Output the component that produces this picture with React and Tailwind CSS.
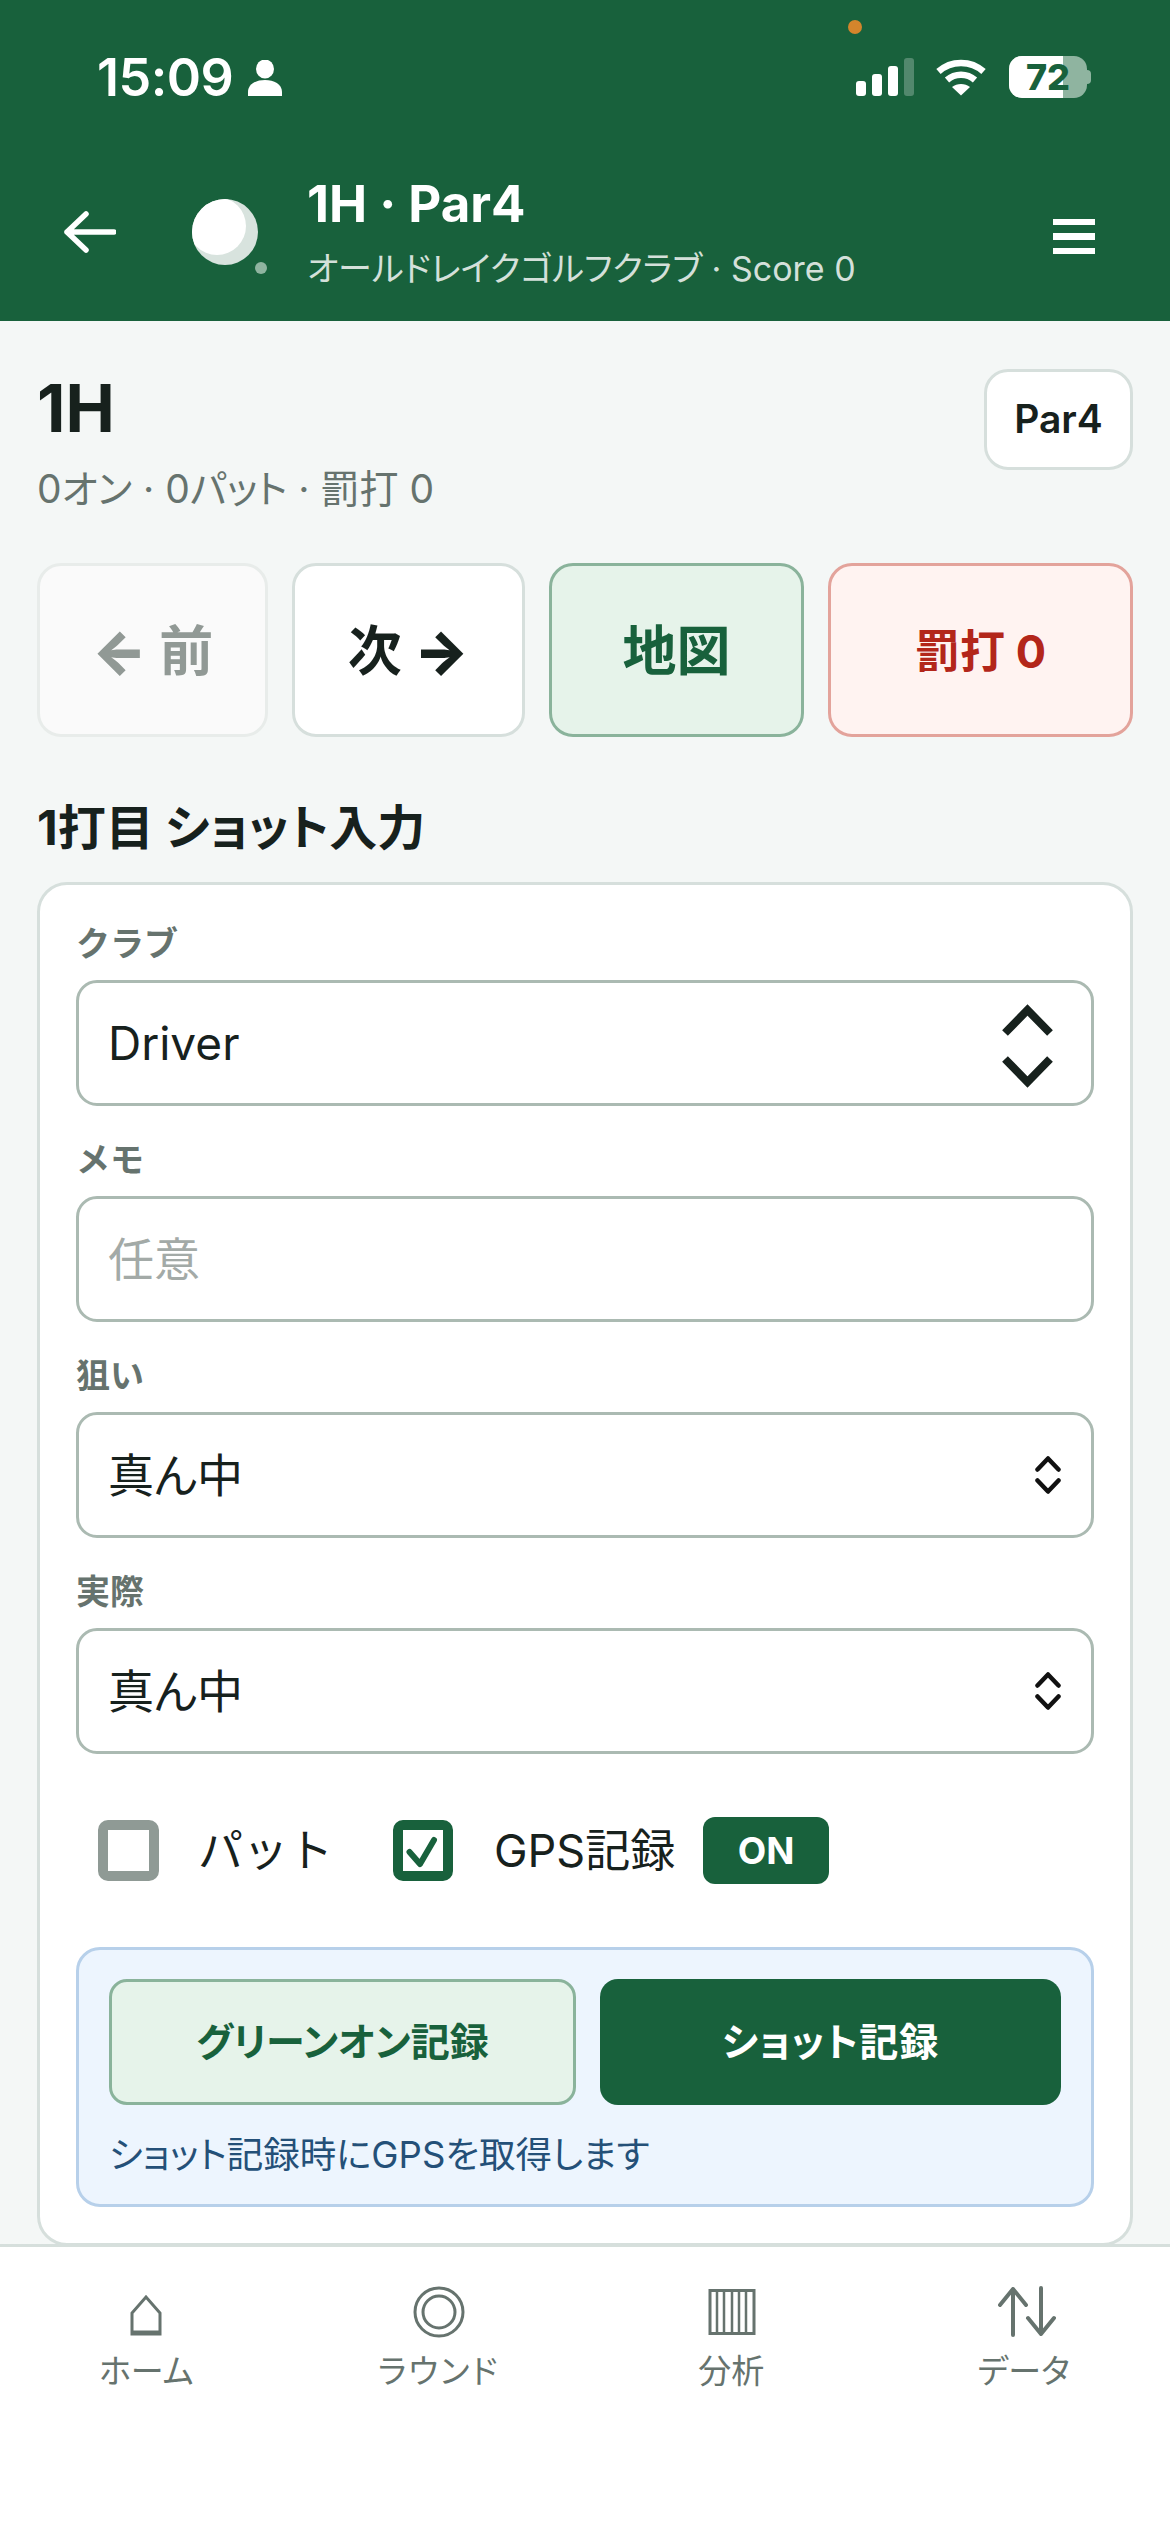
import React from "react";

function SmallChevrons() {
  return (
    <svg className="pointer-events-none absolute right-[33px] top-1/2 -translate-y-1/2" width="26" height="38" viewBox="0 0 26 38" fill="none" stroke="#111" strokeWidth="4.5" strokeLinecap="round" strokeLinejoin="round">
      <path d="M2.5 13.5L13 2.5l10.5 11" />
      <path d="M2.5 24.5L13 35.5l10.5-11" />
    </svg>
  );
}

function BigChevrons() {
  return (
    <svg className="pointer-events-none absolute right-[41px] top-[24px]" width="51" height="84" viewBox="0 0 51 84" fill="none" stroke="#17211d" strokeWidth="8">
      <path d="M3 29L25.5 6 48 29" />
      <path d="M3 55l22.5 23L48 55" />
    </svg>
  );
}

function Field({ label, children, top }) {
  return (
    <div className={top}>
      <div className="h-[40px] text-[34px] leading-[40px] font-semibold text-[#66736e] [font-feature-settings:normal]">{label}</div>
      <div className="relative mt-[16px]">{children}</div>
    </div>
  );
}

function Select({ value, big }) {
  return (
    <>
      <select defaultValue={value} className="block h-[126px] w-full appearance-none rounded-[21px] border-[3px] border-[#abbab2] bg-white pl-[29px] text-[46px] text-[#17211d] outline-none">
        <option>{value}</option>
      </select>
      {big ? <BigChevrons /> : <SmallChevrons />}
    </>
  );
}

function TabIcon({ children }) {
  return <svg width="64" height="56" viewBox="0 0 64 56" fill="none" stroke="#66736e" className="block">{children}</svg>;
}

function Tab({ label, children, spaced }) {
  return (
    <div className="flex flex-1 flex-col items-center">
      {children}
      <div className={"mt-[9px] text-[33px] leading-[40px] text-[#66736e] " + (spaced ? "tracking-[2px]" : "")}>{label}</div>
    </div>
  );
}

export default function App() {
  return (
    <div className="flex h-[2532px] w-[1170px] flex-col overflow-hidden bg-[#f4f7f6] font-['Inter','Noto_Sans_CJK_JP',sans-serif] text-[#17211d] [font-feature-settings:'palt']">
      {/* Header */}
      <header className="relative h-[321px] shrink-0 bg-[#18613c] text-white">
        <div className="flex h-[156px] items-start justify-between pl-[97px] pr-[79px] pt-[50px]">
          <div className="flex items-center">
            <span className="text-[52px] leading-[56px] font-semibold tracking-[-0.5px]">15:09</span>
            <svg className="ml-[15px]" width="34" height="36" viewBox="0 0 34 36" fill="#fff">
              <ellipse cx="17" cy="9" rx="9" ry="9.5" />
              <path d="M0 36v-4c0-8 8-12 17-12s17 4 17 12v4z" />
            </svg>
          </div>
          <div className="flex items-center pt-[6px]">
            <svg width="58" height="38" viewBox="0 0 58 38" fill="#fff">
              <rect x="0" y="23" width="10" height="15" rx="3" />
              <rect x="16" y="16" width="10" height="22" rx="3" />
              <rect x="32" y="8" width="10" height="30" rx="3" />
              <rect x="48" y="0" width="10" height="38" rx="3" fillOpacity="0.25" />
            </svg>
            <svg className="ml-[22px]" width="50" height="38" viewBox="0 0 50 38" fill="none" stroke="#fff" strokeWidth="6.5">
              <path d="M2.5 13.5C15 2 35 2 47.5 13.5" />
              <path d="M11 22c8-7 20-7 28 0" />
              <path d="M25 37.5L16 29c5-4 13-4 18 0z" fill="#fff" stroke="none" />
            </svg>
            <div className="relative ml-[23px] flex h-[42px] w-[78px] items-center justify-center overflow-hidden rounded-[13px] bg-[#8fb4a0]">
              <div className="absolute inset-y-0 left-0 w-[54px] bg-white" />
              <span className="relative text-[36px] leading-none font-extrabold text-[#18613c]">72</span>
            </div>
            <div className="h-[14px] w-[4px] rounded-r-full bg-[#8fb4a0]" />
          </div>
        </div>
        <div className="absolute left-[848px] top-[20px] h-[14px] w-[14px] rounded-full bg-[#d4852c]" />
        <div className="flex h-[151px] items-center pl-[64px] pr-[75px]">
          <svg width="52" height="42" viewBox="0 0 52 42" fill="none" stroke="#fff" strokeWidth="5.5" strokeLinecap="round" strokeLinejoin="round">
            <path d="M50 21H3M22 3L3 21l19 18" />
          </svg>
          <div className="relative ml-[76px] h-[66px] w-[66px] shrink-0">
            <div className="relative h-[66px] w-[66px] overflow-hidden rounded-full bg-[#d8e3de]">
              <div className="absolute left-[-4px] top-[-2px] h-[58px] w-[58px] rounded-full bg-white" />
            </div>
            <div className="absolute left-[63px] top-[63px] h-[12px] w-[12px] rounded-full bg-[#8fb4a0]" />
          </div>
          <div className="ml-[49px] flex-1">
            <div className="text-[51px] leading-[62px] font-bold">1H · Par4</div>
            <div className="mt-[12px] text-[34px] leading-[44px] text-[#d4e0da]">オールドレイクゴルフクラブ · Score 0</div>
          </div>
          <div className="mt-[10px] flex w-[42px] flex-col gap-[8px]">
            <div className="h-[6.5px] bg-white" />
            <div className="h-[6.5px] bg-white" />
            <div className="h-[6.5px] bg-white" />
          </div>
        </div>
      </header>

      {/* Main */}
      <main className="flex-1 overflow-hidden px-[37px] pt-[48px]">
        <div className="flex items-start justify-between">
          <div>
            <div className="pt-[1px] text-[66px] leading-[76px] font-bold">1H</div>
            <div className="mt-[19px] text-[39px] leading-[48px] text-[#66736e]">0オン · 0パット · 罰打 0</div>
          </div>
          <div className="flex h-[101px] w-[149px] items-center justify-center rounded-[24px] border-[3px] border-[#d6dfdc] bg-white text-[39px] font-semibold">Par4</div>
        </div>

        <div className="mt-[50px] flex h-[174px] gap-[24px]">
          <div className="flex w-[231px] items-center justify-center gap-[12px] rounded-[24px] border-[3px] border-[#e8ecea] bg-[#fafafa] pt-[3px] text-[54px] font-bold text-[#919995]">
            <span className="text-[58px] font-black">←</span><span>前</span>
          </div>
          <div className="flex w-[233px] items-center justify-center gap-[12px] rounded-[24px] border-[3px] border-[#d6dfdc] bg-white pt-[3px] text-[54px] font-bold">
            <span>次</span><span className="text-[58px] font-black">→</span>
          </div>
          <div className="flex w-[255px] items-center justify-center rounded-[24px] border-[3px] border-[#8ab39b] bg-[#e6f3ea] pt-[3px] text-[54px] font-bold text-[#18613c]">地図</div>
          <div className="flex flex-1 items-center justify-center rounded-[24px] border-[3px] border-[#e3a39b] bg-[#fff3f1] pt-[3px] text-[45px] font-bold text-[#b3261a]">罰打 0</div>
        </div>

        <div className="mt-[63px] text-[48px] leading-[56px] font-bold">1打目 ショット入力</div>

        <section className="mt-[26px] rounded-[30px] border-[3px] border-[#d6dfdc] bg-white px-[36px] pb-[36px] pt-[39px]">
          <Field label="クラブ"><Select value="Driver" big /></Field>
          <Field label="メモ" top="mt-[34px]">
            <input placeholder="任意" className="block h-[126px] w-full rounded-[21px] border-[3px] border-[#abbab2] bg-white pl-[29px] pr-[30px] text-[46px] outline-none placeholder:text-[#a3aaa7]" />
          </Field>
          <Field label="狙い" top="mt-[34px]"><Select value="真ん中" /></Field>
          <Field label="実際" top="mt-[34px]"><Select value="真ん中" /></Field>

          <div className="mt-[63px] flex h-[67px] items-center pl-[22px]">
            <span className="h-[61px] w-[61px] shrink-0 rounded-[10px] border-[10px] border-[#8f9a95] bg-white" />
            <span className="ml-[39px] w-[195px] shrink-0 text-[45px] [font-feature-settings:normal]">パット</span>
            <span className="flex h-[61px] w-[60px] shrink-0 items-center justify-center rounded-[10px] border-[10px] border-[#18613c] bg-white">
              <svg width="40" height="41" viewBox="0 0 40 41" fill="none" stroke="#18613c" strokeWidth="6" strokeLinecap="round" strokeLinejoin="round" className="shrink-0">
                <path d="M6.5 22L17 34 31 10" />
              </svg>
            </span>
            <span className="ml-[41px] w-[209px] shrink-0 text-[45px]">GPS記録</span>
            <span className="flex h-[67px] w-[126px] shrink-0 items-center justify-center rounded-[12px] bg-[#18613c] text-[37px] font-bold text-white">ON</span>
          </div>

          <div className="mt-[63px] h-[260px] rounded-[24px] border-[3px] border-[#b7d0ea] bg-[#edf5fe] px-[30px] pt-[29px]">
            <div className="flex gap-[24px]">
              <div className="flex h-[126px] flex-1 items-center justify-center rounded-[18px] border-[3px] border-[#8ab39b] bg-[#e6f3ea] text-[39px] font-bold text-[#18613c]">グリーンオン記録</div>
              <div className="flex h-[126px] flex-1 items-center justify-center rounded-[18px] bg-[#18613c] text-[39px] font-bold tracking-[1px] text-white">ショット記録</div>
            </div>
            <div className="mt-[26px] text-[36.5px] leading-[48px] text-[#245078]">ショット記録時にGPSを取得します</div>
          </div>
        </section>
      </main>

      {/* Tab bar */}
      <nav className="flex h-[288px] shrink-0 justify-between border-t-[3px] border-[#d6dfdc] bg-white pt-[39px]">
        <Tab label="ホーム">
          <TabIcon><path d="M18 48V27L32 11l14 16v21z" strokeWidth="3" /><path d="M17 46.5h30" strokeWidth="4" /></TabIcon>
        </Tab>
        <Tab label="ラウンド" spaced>
          <TabIcon><circle cx="32" cy="26" r="24" strokeWidth="3" /><circle cx="32" cy="26" r="16" strokeWidth="3" /></TabIcon>
        </Tab>
        <Tab label="分析">
          <TabIcon>
            <path d="M11 4.5h44v43H11z" strokeWidth="3" />
            <path d="M18 4v44M25 4v44M33 4v44M40 4v44M47 4v44" strokeWidth="2.5" />
          </TabIcon>
        </Tab>
        <Tab label="データ">
          <TabIcon>
            <path d="M21 49V3M8 19L21 3l13 16" strokeWidth="4" strokeLinecap="round" strokeLinejoin="round" />
            <path d="M49 2v46M36 32l13 16 13-16" strokeWidth="4" strokeLinecap="round" strokeLinejoin="round" />
          </TabIcon>
        </Tab>
      </nav>
    </div>
  );
}
